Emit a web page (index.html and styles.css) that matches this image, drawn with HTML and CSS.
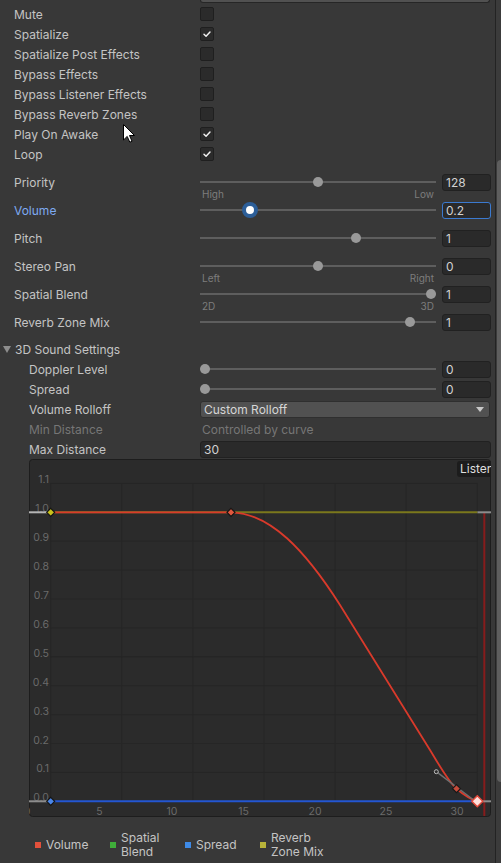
FILE: index.html
```html
<!DOCTYPE html>
<html>
<head>
<meta charset="utf-8">
<link rel="stylesheet" href="styles.css">
</head>
<body>
<div class="inspector">
  <div class="stub"><div class="stub-field"></div></div>

  <div class="row"><span class="label">Mute</span><span class="check"></span></div>
  <div class="row"><span class="label">Spatialize</span><span class="check on"><svg viewBox="0 0 14 14"><path d="M3.5 7.2 L5.9 9.6 L10.5 4.6"/></svg></span></div>
  <div class="row"><span class="label">Spatialize Post Effects</span><span class="check"></span></div>
  <div class="row"><span class="label">Bypass Effects</span><span class="check"></span></div>
  <div class="row"><span class="label">Bypass Listener Effects</span><span class="check"></span></div>
  <div class="row"><span class="label">Bypass Reverb Zones</span><span class="check"></span></div>
  <div class="row"><span class="label">Play On Awake</span><span class="check on"><svg viewBox="0 0 14 14"><path d="M3.5 7.2 L5.9 9.6 L10.5 4.6"/></svg></span></div>
  <div class="row"><span class="label">Loop</span><span class="check on"><svg viewBox="0 0 14 14"><path d="M3.5 7.2 L5.9 9.6 L10.5 4.6"/></svg></span></div>

  <div class="sliders">
    <div class="srow">
      <div class="line"><span class="label">Priority</span><div class="track"><div class="range"><span class="thumb" style="left:50%"></span></div></div><span class="field">128</span></div>
      <div class="sublabels"><span>High</span><span>Low</span></div>
    </div>
    <div class="srow">
      <div class="line"><span class="label focus">Volume</span><div class="track"><div class="range"><span class="thumb active" style="left:20%"></span></div></div><span class="field active">0.2</span></div>
    </div>
    <div class="srow">
      <div class="line"><span class="label">Pitch</span><div class="track"><div class="range"><span class="thumb" style="left:66.67%"></span></div></div><span class="field">1</span></div>
    </div>
    <div class="srow">
      <div class="line"><span class="label">Stereo Pan</span><div class="track"><div class="range"><span class="thumb" style="left:50%"></span></div></div><span class="field">0</span></div>
      <div class="sublabels"><span>Left</span><span>Right</span></div>
    </div>
    <div class="srow">
      <div class="line"><span class="label">Spatial Blend</span><div class="track"><div class="range"><span class="thumb" style="left:100%"></span></div></div><span class="field">1</span></div>
      <div class="sublabels"><span>2D</span><span>3D</span></div>
    </div>
    <div class="srow">
      <div class="line"><span class="label">Reverb Zone Mix</span><div class="track"><div class="range"><span class="thumb" style="left:90.9%"></span></div></div><span class="field">1</span></div>
    </div>
  </div>

  <div class="fold"><svg class="tri" viewBox="0 0 8 7"><path d="M0 0 L8 0 L4 7 Z"/></svg><span>3D Sound Settings</span></div>

  <div class="row sub"><span class="label">Doppler Level</span><div class="track"><div class="range"><span class="thumb" style="left:0%"></span></div></div><span class="field">0</span></div>
  <div class="row sub"><span class="label">Spread</span><div class="track"><div class="range"><span class="thumb" style="left:0%"></span></div></div><span class="field">0</span></div>
  <div class="row sub"><span class="label">Volume Rolloff</span><div class="dropdown"><span>Custom Rolloff</span><svg class="arrow" viewBox="0 0 8 5"><path d="M0 0 L8 0 L4 5 Z"/></svg></div></div>
  <div class="row sub disabled"><span class="label">Min Distance</span><span class="note">Controlled by curve</span></div>
  <div class="row sub"><span class="label">Max Distance</span><span class="field wide">30</span></div>

  <div class="graph">
    <svg class="graph-svg" viewBox="29 459 462 358" width="462" height="358">
      <rect x="29.5" y="459.5" width="461" height="357" rx="3" fill="#2b2b2b" stroke="#1d1d1d"/>
      <g stroke="#262626" stroke-width="1">
        <line x1="50.7" y1="483" x2="50.7" y2="801"/>
        <line x1="121.8" y1="483" x2="121.8" y2="801"/>
        <line x1="192.9" y1="483" x2="192.9" y2="801"/>
        <line x1="264" y1="483" x2="264" y2="801"/>
        <line x1="335.1" y1="483" x2="335.1" y2="801"/>
        <line x1="406.2" y1="483" x2="406.2" y2="801"/>
        <line x1="477.3" y1="483" x2="477.3" y2="801"/>
        <line x1="50.7" y1="483.4" x2="477.3" y2="483.4"/>
        <line x1="50.7" y1="541.2" x2="477.3" y2="541.2"/>
        <line x1="50.7" y1="570.1" x2="477.3" y2="570.1"/>
        <line x1="50.7" y1="599" x2="477.3" y2="599"/>
        <line x1="50.7" y1="627.9" x2="477.3" y2="627.9"/>
        <line x1="50.7" y1="656.8" x2="477.3" y2="656.8" stroke="#242424"/>
        <line x1="50.7" y1="685.7" x2="477.3" y2="685.7"/>
        <line x1="50.7" y1="714.6" x2="477.3" y2="714.6"/>
        <line x1="50.7" y1="743.5" x2="477.3" y2="743.5"/>
        <line x1="50.7" y1="772.4" x2="477.3" y2="772.4"/>
      </g>
      <g class="axis" text-anchor="end">
        <text x="49" y="483">1.1</text>
        <text x="49" y="512">1.0</text>
        <text x="49" y="541">0.9</text>
        <text x="49" y="570">0.8</text>
        <text x="49" y="599">0.7</text>
        <text x="49" y="628">0.6</text>
        <text x="49" y="657">0.5</text>
        <text x="49" y="686">0.4</text>
        <text x="49" y="715">0.3</text>
        <text x="49" y="744">0.2</text>
        <text x="49" y="772">0.1</text>
        <text x="49" y="801">0.0</text>
      </g>
      <g class="axis" text-anchor="middle">
        <text x="27" y="815">0</text>
        <text x="99.5" y="815">5</text>
        <text x="172" y="815">10</text>
        <text x="243.5" y="815">15</text>
        <text x="315" y="815">20</text>
        <text x="386" y="815">25</text>
        <text x="457" y="815">30</text>
      </g>
      <line x1="484.3" y1="512" x2="484.3" y2="816" stroke="#861c1c" stroke-width="2"/>
      <line x1="29" y1="512.3" x2="50.7" y2="512.3" stroke="#b5b5b5" stroke-width="2"/>
      <line x1="477.3" y1="512.3" x2="491" y2="512.3" stroke="#8c8c8c" stroke-width="2"/>
      <line x1="29" y1="801.3" x2="50.7" y2="801.3" stroke="#8c8c8c" stroke-width="2"/>
      <line x1="477.3" y1="801.3" x2="491" y2="801.3" stroke="#8c8c8c" stroke-width="2"/>
      <line x1="50.7" y1="512.3" x2="477.3" y2="512.3" stroke="#7b781c" stroke-width="2"/>
      <line x1="50.7" y1="801.3" x2="477.3" y2="801.3" stroke="#2356d2" stroke-width="2"/>
      <path d="M50.7 512.3 L231 512.3 C270 513 305 550 340 605 L430 750 C441 768 448 781 456.5 788.7 C464 795 470 799 477.3 801.3" fill="none" stroke="#d93a2b" stroke-width="1.8"/>
      <line x1="436.3" y1="771.7" x2="473" y2="799.5" stroke="#6f6f6f" stroke-width="1.5"/>
      <circle cx="436.3" cy="771.7" r="2" fill="#2b2b2b" stroke="#bdbdbd" stroke-width="1"/>
      <path d="M50.7 508.3 L54.7 512.3 L50.7 516.3 L46.7 512.3 Z" fill="#c9c21c" stroke="#141414" stroke-width="1.2"/>
      <path d="M231 508.3 L235 512.3 L231 516.3 L227 512.3 Z" fill="#e0583e" stroke="#141414" stroke-width="1.2"/>
      <path d="M50.7 797.3 L54.7 801.3 L50.7 805.3 L46.7 801.3 Z" fill="#4a86e8" stroke="#141414" stroke-width="1.2"/>
      <path d="M456.5 784.7 L460.5 788.7 L456.5 792.7 L452.5 788.7 Z" fill="#c74a3a" stroke="#181818" stroke-width="1.2"/>
      <path d="M477.3 795.8 L482.8 801.3 L477.3 806.8 L471.8 801.3 Z" fill="#ffe0dc" stroke="#e2493a" stroke-width="1.5"/>
    </svg>
    <div class="tab">Listener</div>
  </div>

  <div class="legend">
    <div class="item"><span class="sw red"></span><span>Volume</span></div>
    <div class="item"><span class="sw green"></span><span>Spatial<br>Blend</span></div>
    <div class="item"><span class="sw blue"></span><span>Spread</span></div>
    <div class="item"><span class="sw yellow"></span><span>Reverb<br>Zone Mix</span></div>
  </div>
</div>

<div class="scrollbar"><div class="sthumb"></div></div>
<svg class="cursor" viewBox="0 0 12 19" width="12" height="19"><path d="M0.5 0.5 L0.5 16 L4.2 12.4 L6.8 18.2 L9 17.2 L6.5 11.5 L11.5 11.5 Z"/></svg>
</body>
</html>
```

FILE: styles.css
```css
* { box-sizing: border-box; }

body {
  margin: 0;
  width: 501px;
  height: 863px;
  overflow: hidden;
  position: relative;
  background: #383838;
  color: #c4c4c4;
  font-family: Inter, "Noto Sans", "Liberation Sans", sans-serif;
  font-size: 12px;
}

.inspector {
  width: 495px;
  padding-right: 5px;
}

.stub {
  height: 4px;
  padding-left: 200px;
}
.stub-field {
  height: 3px;
  background: #515151;
  border: 1px solid #262626;
  border-top: none;
  border-radius: 0 0 3px 3px;
}

.row {
  display: flex;
  align-items: center;
  height: 20px;
  padding-left: 14px;
}
.label {
  width: 186px;
  flex: none;
  white-space: nowrap;
}
.row.sub { padding-left: 29px; }
.row.sub .label { width: 171px; }

.check {
  width: 14px;
  height: 14px;
  background: #2b2b2b;
  border: 1px solid #1f1f1f;
  border-radius: 2px;
  display: flex;
}
.check svg {
  width: 12px;
  height: 12px;
}
.check path {
  fill: none;
  stroke: #f0f0f0;
  stroke-width: 1.7;
  stroke-linecap: round;
  stroke-linejoin: round;
}

.sliders { margin-top: 9px; }
.srow {
  height: 28px;
  padding-left: 14px;
}
.line {
  display: flex;
  align-items: center;
  height: 18px;
}
.label.focus { color: #7eaaf2; }

.track {
  position: relative;
  width: 236px;
  height: 18px;
  margin-right: 6px;
  flex: none;
}
.track::before {
  content: "";
  position: absolute;
  left: 0;
  right: 0;
  top: 8px;
  height: 2px;
  background: #5e5e5e;
}
.range {
  position: absolute;
  left: 5px;
  right: 5px;
  top: 0;
  bottom: 0;
}
.thumb {
  position: absolute;
  top: 4px;
  width: 10px;
  height: 10px;
  margin-left: -5px;
  border-radius: 50%;
  background: #999999;
}
.thumb.active {
  top: 1px;
  width: 16px;
  height: 16px;
  margin-left: -8px;
  background: #ffffff;
  border: 4px solid #2c5e98;
}

.field {
  width: 49px;
  height: 17px;
  flex: none;
  background: #2a2a2a;
  border: 1px solid #212121;
  border-radius: 3px;
  padding: 0 3px;
  line-height: 15px;
  color: #d2d2d2;
  white-space: nowrap;
}
.field.active { border-color: #3b7ad0; }
.field.wide { width: 291px; }

.sublabels {
  display: flex;
  justify-content: space-between;
  width: 236px;
  margin-left: 186px;
  margin-top: -2px;
  padding: 0 2px;
  font-size: 10px;
  line-height: 10px;
  color: #7d7d7d;
}

.fold {
  display: flex;
  align-items: center;
  height: 20px;
  margin-top: -2px;
  padding-left: 3px;
}
.tri {
  width: 8px;
  height: 7px;
  margin-right: 4px;
}
.tri path { fill: #8e8e8e; }

.dropdown {
  display: flex;
  align-items: center;
  justify-content: space-between;
  width: 291px;
  height: 17px;
  background: #515151;
  border: 1px solid #2f2f2f;
  border-radius: 3px;
  padding: 0 5px 0 3px;
  color: #d6d6d6;
}
.arrow {
  width: 8px;
  height: 5px;
}
.arrow path { fill: #c8c8c8; }

.disabled .label, .note { color: #767676; }
.note { padding-left: 2px; }

.graph {
  position: relative;
  margin-left: 29px;
  width: 462px;
  height: 358px;
  overflow: hidden;
}
.graph-svg { display: block; }
.axis text {
  font-family: Inter, "Noto Sans", sans-serif;
  font-size: 10.5px;
  fill: #6a6a6a;
}
.tab {
  position: absolute;
  left: 428px;
  top: 2px;
  width: 40px;
  height: 16px;
  background: #1c1c1c;
  border-radius: 3px;
  padding-left: 3px;
  line-height: 16px;
  color: #dedede;
  white-space: nowrap;
  overflow: hidden;
}

.legend {
  display: flex;
  margin-top: 13px;
  height: 30px;
  padding-left: 35px;
  line-height: 14px;
}
.item {
  display: flex;
  align-items: center;
  width: 75px;
}
.sw {
  width: 6px;
  height: 6px;
  margin-right: 5px;
  flex: none;
}
.sw.red { background: #e2503b; }
.sw.green { background: #3fae3a; }
.sw.blue { background: #3e8ae6; }
.sw.yellow { background: #b7b33a; }

.scrollbar {
  position: absolute;
  left: 495px;
  top: 0;
  width: 6px;
  height: 863px;
  background: #3b3b3b;
  border-left: 1px solid #232323;
}
.sthumb {
  position: absolute;
  left: 1px;
  right: -4px;
  top: 160px;
  height: 622px;
  background: #5e5e5e;
  border-radius: 4px;
}

.cursor {
  position: absolute;
  left: 123px;
  top: 124px;
}
.cursor path {
  fill: #ffffff;
  stroke: #000000;
  stroke-width: 1;
  stroke-linejoin: miter;
}
```
